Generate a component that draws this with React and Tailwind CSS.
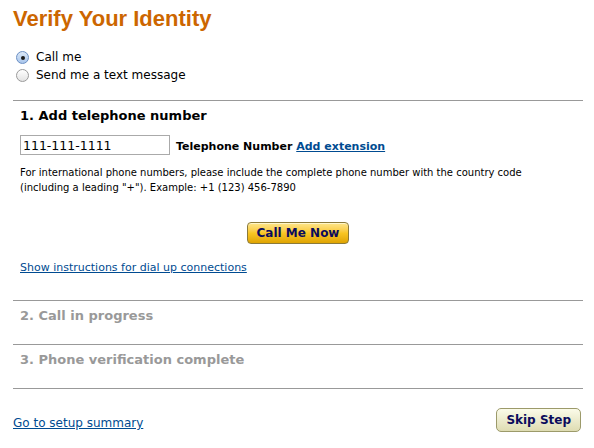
import React, { useState } from "react";

function Radio({ checked, onClick }) {
  return (
    <span
      onClick={onClick}
      className={
        "flex h-[13px] w-[13px] items-center justify-center rounded-full border " +
        (checked
          ? "border-[#6b8fc4] bg-gradient-to-b from-[#dbe8f7] to-[#a9c6ec]"
          : "border-[#9a9a9a] bg-gradient-to-b from-[#ffffff] to-[#e3e3e3]")
      }
    >
      {checked && <span className="h-[4px] w-[4px] rounded-full bg-[#1a1a1a]" />}
    </span>
  );
}

function Step({ children }) {
  return (
    <div className="border-t border-[#999999] px-[7px] pt-[6px] pb-[19px]">
      <h2 className="text-[13px] font-bold leading-[18px] text-[#999999]">{children}</h2>
    </div>
  );
}

export default function App() {
  const [mode, setMode] = useState("call");
  const [phone, setPhone] = useState("111-111-1111");

  return (
    <div className="w-[594px] h-[448px] bg-white px-[13px] pt-[5px] font-['DejaVu_Sans',Verdana,sans-serif] text-black">
      <h1 className="font-['Liberation_Sans',Arial,sans-serif] text-[22px] font-bold leading-[28px] text-[#cc6600]">
        Verify Your Identity
      </h1>

      <div className="mt-[18px] flex flex-col gap-[5px] pl-[3px] text-[12px] leading-[13px]">
        <label className="flex items-center gap-[7px]" onClick={() => setMode("call")}>
          <Radio checked={mode === "call"} />
          Call me
        </label>
        <label className="flex items-center gap-[7px]" onClick={() => setMode("text")}>
          <Radio checked={mode === "text"} />
          Send me a text message
        </label>
      </div>

      <div className="mt-[18px] w-[570px] border-t border-[#999999] px-[7px] pt-[6px] pb-[24px]">
        <h2 className="text-[13px] font-bold leading-[18px]">1. Add telephone number</h2>

        <div className="mt-[10px] flex items-center">
          <input
            value={phone}
            onChange={(e) => setPhone(e.target.value)}
            className="h-[20px] w-[150px] border border-[#aaaaaa] px-[2px] text-[12.5px] text-black outline-none"
          />
          <span className="ml-[6px] mt-[4px] text-[11px] font-bold">
            Telephone Number{" "}
            <a href="#" className="text-[#004b91] underline">
              Add extension
            </a>
          </span>
        </div>

        <p className="mt-[9px] text-[10px] leading-[15px]">
          For international phone numbers, please include the complete phone number with the country code
          <br />
          (including a leading "+"). Example: +1 (123) 456-7890
        </p>

        <div className="mt-[27px] flex justify-center">
          <button className="h-[22px] rounded-[4px] border border-[#8b7a3a] bg-gradient-to-b from-[#fde68a] via-[#f9c623] to-[#e0a400] px-[9px] text-[12px] font-bold leading-[18px] text-[#0b0b5c] shadow-[inset_0_1px_0_#fff6c8]">
            Call Me Now
          </button>
        </div>

        <a href="#" className="mt-[16px] block text-[11px] text-[#004b91] underline">
          Show instructions for dial up connections
        </a>
      </div>

      <div className="w-[570px]">
        <Step>2. Call in progress</Step>
        <Step>3. Phone verification complete</Step>
        <div className="border-t border-[#999999]" />
      </div>

      <div className="mt-[19px] flex w-[570px] items-center justify-between">
        <a href="#" className="mt-[6px] text-[12px] text-[#004b91] underline">
          Go to setup summary
        </a>
        <button className="mr-[2px] h-[24px] rounded-[5px] border border-[#9c9a6a] bg-gradient-to-b from-[#fbfbe9] to-[#dedcb2] px-[9px] text-[12px] font-bold text-[#0b0b5c]">
          Skip Step
        </button>
      </div>
    </div>
  );
}
